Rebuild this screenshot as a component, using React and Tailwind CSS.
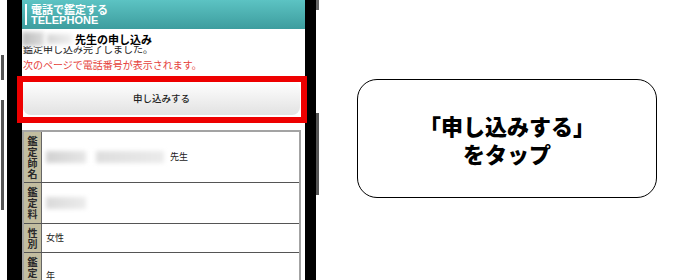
const jp = { fontFamily: '"Noto Sans CJK JP", "Noto Sans", sans-serif' };

function Blur({ className }) {
  return <div className={`blur-[2px] ${className}`} />;
}

function Row({ label, height, children }) {
  return (
    <div className={`flex border-b-[1.5px] border-[#555] ${height}`}>
      <div className="w-[18px] shrink-0 bg-[#c2bda0] border-r border-[#666] flex flex-col items-center pt-[3px] text-[10px] leading-[11px] font-bold text-[#2a2a2a]">
        {label.split('').map((c, i) => (
          <span key={i}>{c}</span>
        ))}
      </div>
      <div className="flex-1 flex items-center pl-[4px] text-[9px] text-[#222]">{children}</div>
    </div>
  );
}

function Phone() {
  return (
    <div className="relative w-[322px] h-full shrink-0">
      {/* side buttons */}
      <div className="absolute left-[1px] top-[55px] w-[3px] h-[25px] bg-[#555]" />
      <div className="absolute left-[1px] top-[100px] w-[3px] h-[110px] bg-[#555]" />
      <div className="absolute left-[316px] top-0 w-[3px] h-[10px] bg-[#666]" />
      <div className="absolute left-[316px] top-[113px] w-[3px] h-[82px] bg-[#555]" />

      <div className="ml-[7px] w-[309px] h-full bg-black pl-[15px] pr-[11px]">
        <div className="h-full bg-white overflow-hidden" style={jp}>
          <div className="h-[29px] bg-gradient-to-b from-[#5cc3c3] to-[#3d9d9e] flex items-center">
            <div className="ml-[3px] w-[2px] h-[21px] bg-white" />
            <div className="ml-[4px] text-white font-bold">
              <div className="text-[11px] leading-[12px]">電話で鑑定する</div>
              <div className="text-[11px] leading-[11px]" style={{ fontFamily: '"Liberation Sans", Arial, sans-serif' }}>
                TELEPHONE
              </div>
            </div>
          </div>

          <div className="relative z-10 h-[14px] mt-[3px] flex items-center bg-white">
            <Blur className="w-[22px] h-[14px] bg-gradient-to-r from-[#bcbcbc] to-[#dcdcdc]" />
            <Blur className="ml-[3px] w-[25px] h-[10px] bg-gradient-to-r from-[#d6d6d6] to-[#f0f0f0]" />
            <span className="ml-[3px] text-[11px] font-bold text-black leading-[14px]">先生の申し込み</span>
          </div>
          <div className="-mt-[3px] pl-[1px] text-[10px] leading-[12px] text-[#222]">鑑定申し込み完了しました。</div>
          <div className="mt-[4px] pl-[1px] text-[10px] leading-[12px] text-[#e5413b]">次のページで電話番号が表示されます。</div>

          <div className="mt-[10px] ml-[1px] w-[277px] h-[34px] rounded-[8px] bg-gradient-to-b from-white to-[#e2e2e2] flex items-center justify-center text-[9.5px] font-medium text-[#222]">
            申し込みする
          </div>

          <div className="mt-[15px] w-[279px] border-2 border-b-0 border-[#a3a3a3]">
            <Row label="鑑定師名" height="h-[51px]">
              <Blur className="w-[40px] h-[12px] bg-gradient-to-r from-[#d2d2d2] to-[#e6e6e6]" />
              <Blur className="ml-[10px] w-[68px] h-[12px] bg-gradient-to-r from-[#dedede] to-[#ebebeb]" />
              <span className="ml-[6px]">先生</span>
            </Row>
            <Row label="鑑定料" height="h-[41px]">
              <Blur className="w-[40px] h-[12px] bg-gradient-to-r from-[#dadada] to-[#ececec]" />
            </Row>
            <Row label="性別" height="h-[29px]">
              <span>女性</span>
            </Row>
            <Row label="鑑定日" height="h-[40px]">
              <span className="self-start mt-[16px]">年</span>
            </Row>
          </div>
        </div>
      </div>

      {/* highlight frame */}
      <div className="absolute left-[17px] top-[76px] w-[290px] h-[47px] border-[6px] border-[#ee0000]" />
    </div>
  );
}

export default function App() {
  return (
    <div className="w-[680px] h-[280px] bg-white flex overflow-hidden" style={jp}>
      <Phone />
      <div className="ml-[35px] mt-[79px] w-[300px] h-[119px] border border-black rounded-[20px] flex flex-col items-center justify-center text-[22px] leading-[28px] font-black text-black">
        <div>「申し込みする」</div>
        <div>をタップ</div>
      </div>
    </div>
  );
}
